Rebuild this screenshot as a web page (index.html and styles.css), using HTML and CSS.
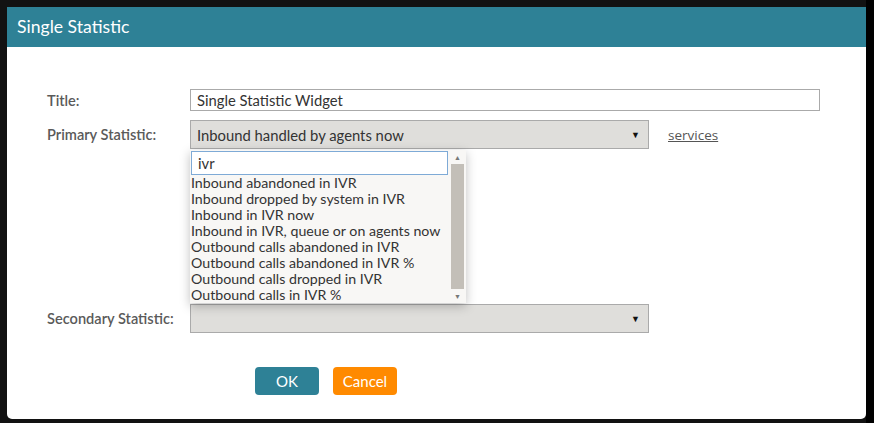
FILE: index.html
```html
<!DOCTYPE html>
<html lang="en">
<head>
  <meta charset="UTF-8" />
  <title>Single Statistic</title>
  <link rel="stylesheet" href="styles.css">
</head>
<body>

<div class="backdrop">
  <div class="dialog">
    <div class="dialog-header">Single Statistic</div>

    <div class="dialog-body">
      <div class="form-row">
        <label class="form-label">Title:</label>
        <div class="text-input wide">Single Statistic Widget</div>
      </div>

      <div class="form-row">
        <label class="form-label">Primary Statistic:</label>
        <div class="select-wrap">
          <div class="select-box">
            <span>Inbound handled by agents now</span>
            <span class="caret">&#9660;</span>
          </div>

          <div class="dropdown">
            <div class="dropdown-list">
              <div class="search-box">ivr</div>
              <div class="option">Inbound abandoned in IVR</div>
              <div class="option">Inbound dropped by system in IVR</div>
              <div class="option">Inbound in IVR now</div>
              <div class="option">Inbound in IVR, queue or on agents now</div>
              <div class="option">Outbound calls abandoned in IVR</div>
              <div class="option">Outbound calls abandoned in IVR %</div>
              <div class="option">Outbound calls dropped in IVR</div>
              <div class="option">Outbound calls in IVR %</div>
            </div>
            <div class="scrollbar">
              <span class="scroll-arrow">&#9650;</span>
              <div class="scroll-thumb"></div>
              <span class="scroll-arrow">&#9660;</span>
            </div>
          </div>
        </div>
        <a class="services-link" href="#">services</a>
      </div>

      <div class="form-row secondary">
        <label class="form-label">Secondary Statistic:</label>
        <div class="select-box">
          <span></span>
          <span class="caret">&#9660;</span>
        </div>
      </div>

      <div class="button-row">
        <button class="btn btn-ok">OK</button>
        <button class="btn btn-cancel">Cancel</button>
      </div>
    </div>
  </div>
</div>

</body>
</html>
```

FILE: styles.css
```css
body {
  margin: 0;
  padding: 0;
  background-color: #121212;
  font-family: 'Lato', 'Open Sans', sans-serif;
  color: #333;
}

.backdrop {
  padding: 7px 8px 4px 7px;
  background: linear-gradient(to right, #121212 866px, #000 866px);
  height: 412px;
}

.dialog {
  width: 859px;
  height: 412px;
  background: white;
  border-radius: 0 0 5px 5px;
  overflow: hidden;
}

.dialog-header {
  height: 40px;
  line-height: 40px;
  padding-left: 10px;
  background-color: #2e8196;
  color: white;
  font-size: 17.6px;
}

.dialog-body {
  padding: 42px 0 0 40px;
}

.form-row {
  display: flex;
  align-items: center;
  margin-bottom: 9px;
}

.form-row.secondary {
  margin-top: 155px;
}

.form-label {
  width: 143px;
  font-size: 14.6px;
  font-weight: 600;
  color: #5a5a5a;
}

.text-input {
  box-sizing: border-box;
  height: 22px;
  line-height: 20px;
  border: 1px solid #aaa;
  padding: 0 6px;
  font-size: 14.8px;
  color: #333;
}

.text-input.wide {
  width: 630px;
}

.select-wrap {
  position: relative;
}

.select-box {
  box-sizing: border-box;
  width: 459px;
  height: 29px;
  display: flex;
  align-items: center;
  justify-content: space-between;
  padding: 0 7px 0 6px;
  background-color: #dfdedb;
  border: 1px solid #aaa;
  font-size: 14.8px;
  color: #333;
}

.caret {
  font-size: 9px;
  color: #111;
  padding-right: 1px;
}

.services-link {
  margin-left: 19px;
  font-family: 'Open Sans', sans-serif;
  font-size: 13.5px;
  color: #555;
}

.dropdown {
  position: absolute;
  top: 30px;
  left: 0;
  width: 276px;
  height: 153px;
  display: flex;
  background-color: #f8f7f5;
  box-shadow: 0 3px 10px rgba(0, 0, 0, 0.25);
  z-index: 10;
}

.dropdown-list {
  flex: 1;
  min-width: 0;
  padding: 1px 0 0 1px;
}

.search-box {
  box-sizing: border-box;
  width: 257px;
  height: 24px;
  line-height: 22px;
  padding: 0 6px;
  background: white;
  border: 1px solid #7eaad6;
  font-size: 14.8px;
}

.option {
  height: 16px;
  line-height: 16px;
  font-size: 14.2px;
  color: #333;
  white-space: nowrap;
}

.scrollbar {
  flex: none;
  width: 15px;
  margin: 0 1px 0 3px;
  display: flex;
  flex-direction: column;
  align-items: center;
}

.scroll-arrow {
  font-size: 7px;
  color: #777;
  height: 14px;
  line-height: 14px;
}

.scroll-thumb {
  flex: 1;
  width: 13px;
  background-color: #c3bfb8;
}

.button-row {
  display: flex;
  gap: 14px;
  padding-left: 208px;
  margin-top: 34px;
}

.btn {
  width: 64px;
  height: 28px;
  border: none;
  border-radius: 4px;
  color: white;
  font-family: 'Lato', sans-serif;
  font-size: 15px;
  cursor: pointer;
}

.btn-ok {
  background-color: #2e8196;
}

.btn-cancel {
  background-color: #ff8a00;
}
```
